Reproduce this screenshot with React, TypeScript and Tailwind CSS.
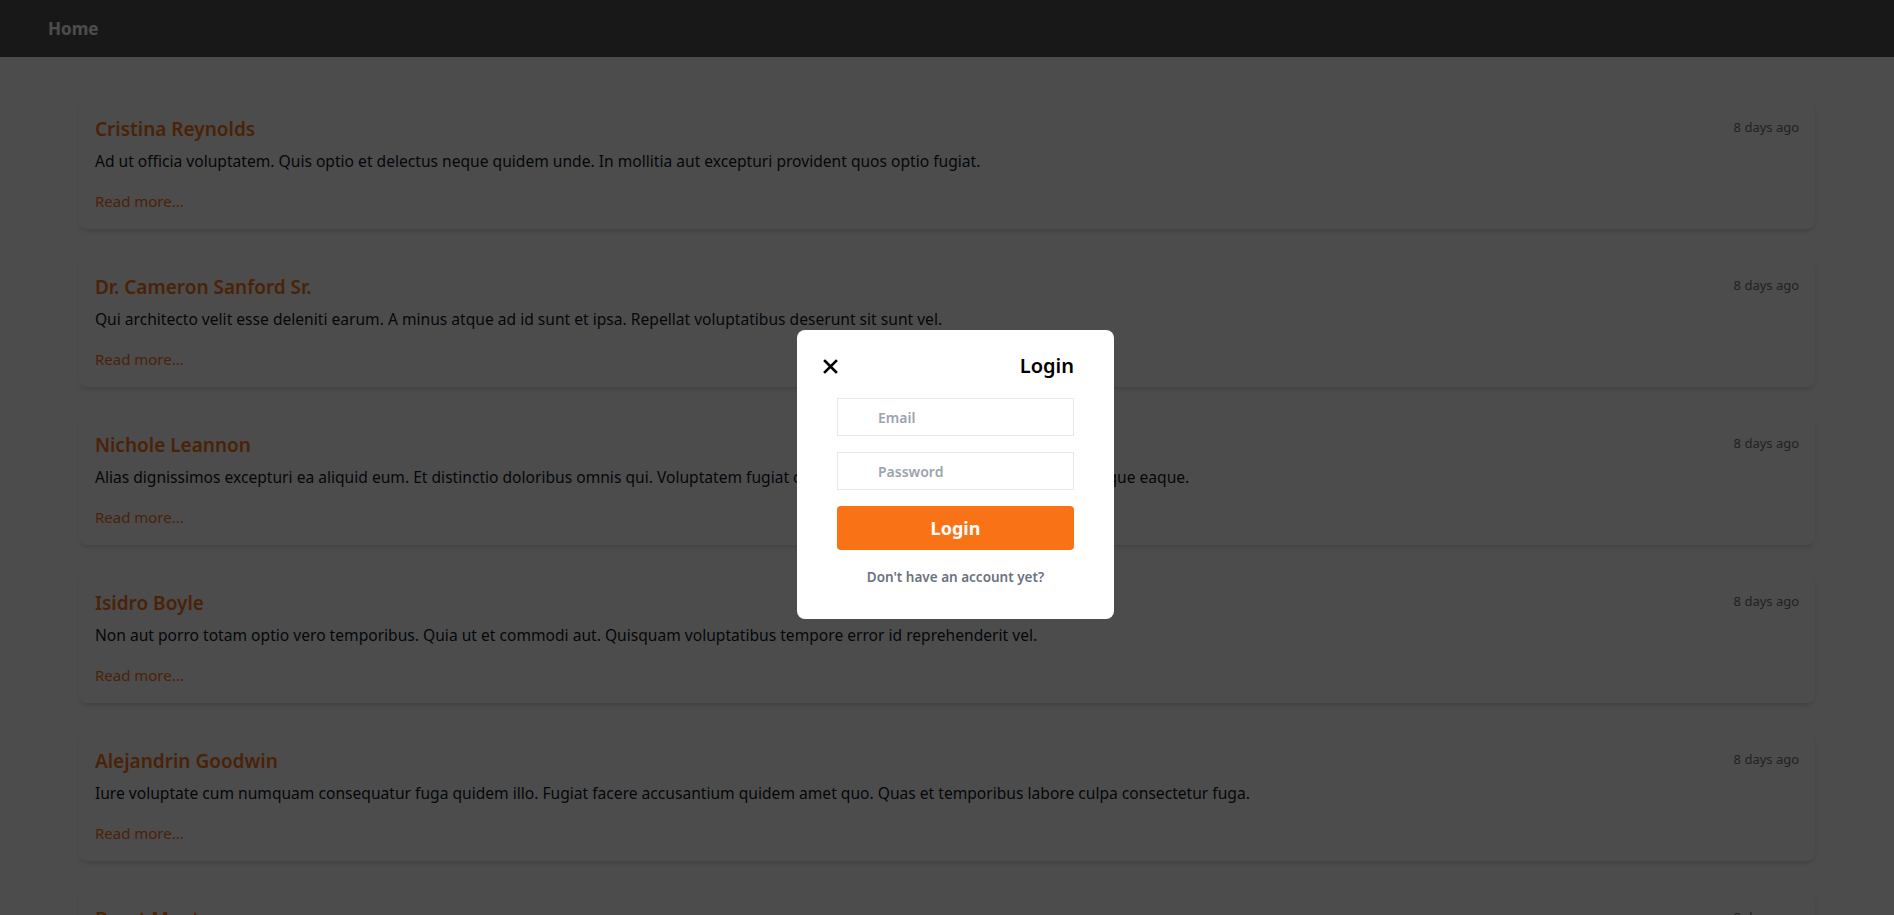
import React from "react";

const posts = [
  {
    name: "Cristina Reynolds",
    body: "Ad ut officia voluptatem. Quis optio et delectus neque quidem unde. In mollitia aut excepturi provident quos optio fugiat.",
  },
  {
    name: "Dr. Cameron Sanford Sr.",
    body: "Qui architecto velit esse deleniti earum. A minus atque ad id sunt et ipsa. Repellat voluptatibus deserunt sit sunt vel.",
  },
  {
    name: "Nichole Leannon",
    body: "Alias dignissimos excepturi ea aliquid eum. Et distinctio doloribus omnis qui. Voluptatem fugiat consequatur qui dolorem sint et nesciunt aque eaque.",
  },
  {
    name: "Isidro Boyle",
    body: "Non aut porro totam optio vero temporibus. Quia ut et commodi aut. Quisquam voluptatibus tempore error id reprehenderit vel.",
  },
  {
    name: "Alejandrin Goodwin",
    body: "Iure voluptate cum numquam consequatur fuga quidem illo. Fugiat facere accusantium quidem amet quo. Quas et temporibus labore culpa consectetur fuga.",
  },
  {
    name: "Brent Mante",
    body: "Et consequatur sed velit aut. Dolorem id ut voluptas eum sit. Ut doloremque nihil et deleniti dicta.",
  },
];

export default function App() {
  return (
    <div
      className="relative min-h-screen bg-white"
      style={{ fontFamily: '"Noto Sans", "Open Sans", sans-serif' }}
    >
      <nav className="flex h-[57px] items-center bg-[#525252] px-12">
        <span className="text-[17px] font-bold text-white">Home</span>
      </nav>

      <main className="mx-auto w-11/12 pt-10">
        {posts.map((p) => (
          <div key={p.name} className="mb-[26px] h-[132px] rounded-lg bg-white px-4 pt-4 shadow-md">
            <div className="flex h-7 items-start justify-between">
              <h2 className="mt-0.5 text-[19px] leading-7 font-semibold text-[#f97316]">{p.name}</h2>
              <span className="pt-1 text-[13px] leading-5 text-[#6b7280]">8 days ago</span>
            </div>
            <p className="mt-2 h-6 text-[15.6px] leading-6 text-[#111827]">{p.body}</p>
            <a className="mt-4 block h-6 text-[15px] leading-6 text-[#f97316]">Read more...</a>
          </div>
        ))}
      </main>

      <div className="fixed inset-0 bg-black/70">
        <div className="absolute left-[797px] top-[330px] w-[317px] rounded-lg bg-white pb-[34px] pt-[22px]">
          <div className="flex items-center justify-between pl-[26px] pr-10">
            <svg width="15" height="15" viewBox="0 0 15 15">
              <path d="M2 2 L13 13 M13 2 L2 13" stroke="black" strokeWidth="2.6" strokeLinecap="square" />
            </svg>
            <h3 className="text-xl leading-7 font-semibold text-black">Login</h3>
          </div>
          <div className="mt-[18px] px-10">
            <input
              placeholder="Email"
              className="block h-[38px] w-full border border-[#e5e7eb] pl-10 text-sm font-semibold text-[#374151] outline-none placeholder:text-[#9ca3af]"
            />
            <input
              placeholder="Password"
              type="password"
              className="mt-4 block h-[38px] w-full border border-[#e5e7eb] pl-10 text-sm font-semibold text-[#374151] outline-none placeholder:text-[#9ca3af]"
            />
            <button className="mt-4 block h-11 w-full rounded bg-[#f97316] text-lg font-bold text-white">
              Login
            </button>
            <p className="mt-[19px] text-center text-[13.5px] leading-4 font-semibold text-[#6b7280]">
              Don't have an account yet?
            </p>
          </div>
        </div>
      </div>
    </div>
  );
}
